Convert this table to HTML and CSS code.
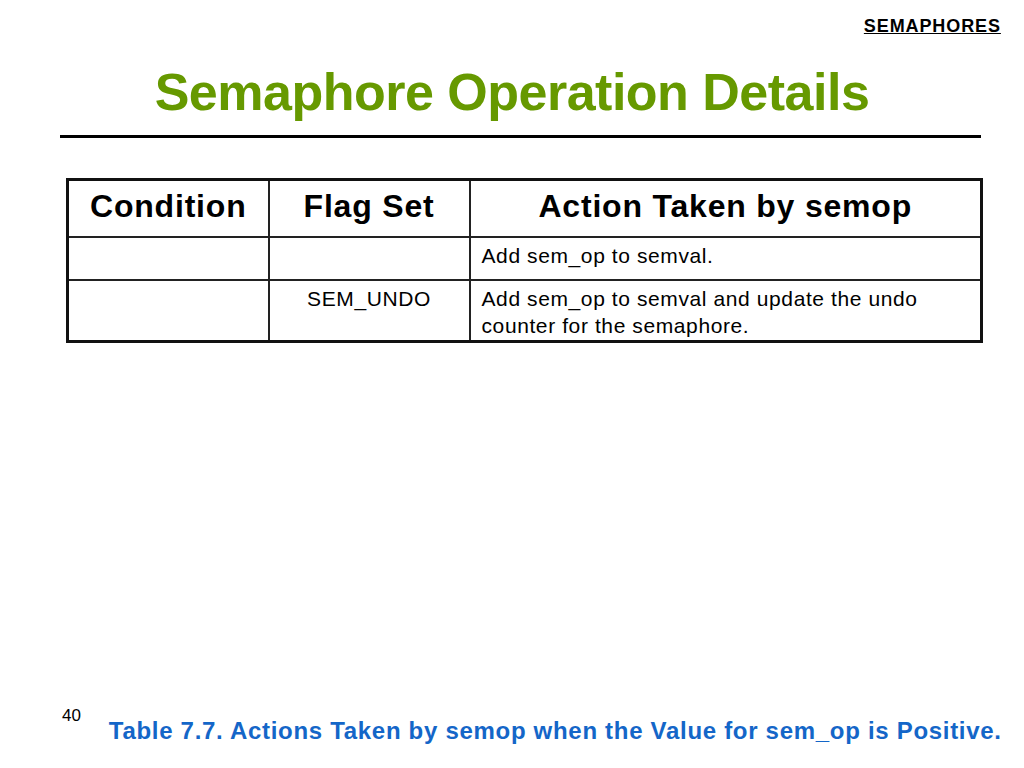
FILE: index.html
```html
<!DOCTYPE html>
<html lang="en">
<head>
<meta charset="utf-8">
<title>Semaphore Operation Details</title>
<link rel="stylesheet" href="styles.css">
</head>
<body>
<div class="slide">
  <div class="topbar"><span class="section">SEMAPHORES</span></div>
  <h1 class="title">Semaphore Operation Details</h1>
  <div class="rule"></div>
  <table class="ops">
    <colgroup>
      <col class="c1"><col class="c2"><col class="c3">
    </colgroup>
    <tr class="head">
      <th>Condition</th>
      <th>Flag Set</th>
      <th>Action Taken by semop</th>
    </tr>
    <tr class="r1">
      <td></td>
      <td></td>
      <td class="action">Add sem_op to semval.</td>
    </tr>
    <tr class="r2">
      <td></td>
      <td class="flag">SEM_UNDO</td>
      <td class="action">Add sem_op to semval and update the undo counter for the semaphore.</td>
    </tr>
  </table>
  <div class="footer">
    <span class="pageno">40</span>
    <span class="caption">Table 7.7. Actions Taken by semop when the Value for sem_op is Positive.</span>
  </div>
</div>
</body>
</html>
```

FILE: styles.css
```css
html, body {
  margin: 0;
  padding: 0;
  background: #ffffff;
}
body {
  font-family: "Liberation Sans", Arial, sans-serif;
  color: #000;
}
.slide {
  width: 1024px;
  height: 768px;
  display: flex;
  flex-direction: column;
  overflow: hidden;
}
.topbar {
  display: flex;
  justify-content: flex-end;
  padding: 16px 24px 0 0;
}
.section {
  font-size: 18px;
  line-height: 20px;
  font-weight: bold;
  text-decoration: underline;
  letter-spacing: 0.9px;
  margin-right: -0.9px;
}
.title {
  margin: 26px 0 0 0;
  text-align: center;
  font-size: 52px;
  line-height: 60px;
  letter-spacing: -0.5px;
  font-weight: bold;
  color: #669900;
}
.rule {
  height: 3px;
  background: #000;
  margin: 13px 43px 0 60px;
}
.ops {
  margin: 40px 0 0 66px;
  width: 914px;
  table-layout: fixed;
  border-collapse: collapse;
  border: 3px solid #111;
}
.c1 { width: 201px; }
.c2 { width: 201px; }
.c3 { width: 512px; }
.ops th, .ops td {
  border: 2px solid #222;
  padding: 0;
}
.ops th {
  font-size: 32px;
  letter-spacing: 0.8px;
  font-weight: bold;
  text-align: center;
  vertical-align: middle;
  padding-bottom: 3px;
}
.head { height: 57px; }
.r1 { height: 43px; }
.r2 { height: 62px; }
.ops td {
  font-size: 21px;
  line-height: 27px;
  letter-spacing: 0.6px;
  vertical-align: top;
}
.action {
  padding: 4px 10px 0 11px !important;
}
.r2 .action {
  padding-top: 4px !important;
}
.flag {
  text-align: center;
  padding-top: 4px !important;
}
.footer {
  margin-top: auto;
  display: flex;
  justify-content: space-between;
  align-items: flex-start;
  padding: 0 23px 24px 62px;
}
.pageno {
  font-size: 17px;
  line-height: 20px;
  margin-top: -4px;
}
.caption {
  margin-top: 7px;
  font-size: 24px;
  line-height: 27px;
  font-weight: bold;
  letter-spacing: 0.7px;
  margin-right: -0.7px;
  color: #1466c8;
}
```
